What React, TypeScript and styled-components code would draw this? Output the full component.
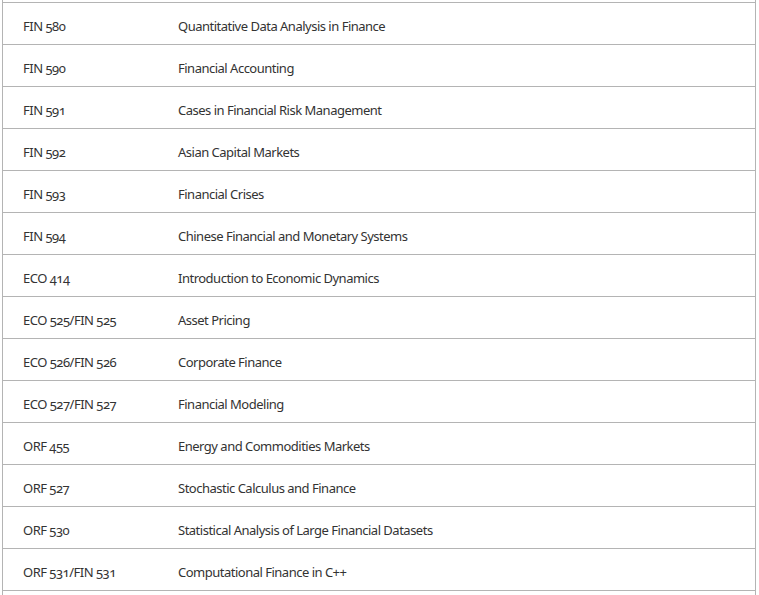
import React from "react";
import styled, { createGlobalStyle } from "styled-components";

const Global = createGlobalStyle`
  html, body { margin: 0; padding: 0; background: #fff; overflow: hidden; }
  body { font-family: "Noto Sans", "Open Sans", sans-serif; }
`;

const Frame = styled.div`
  margin-left: 2px;
  width: 754px;
  box-sizing: border-box;
  border-left: 1px solid #b4b4b4;
  border-right: 1px solid #b4b4b4;
  padding-top: 2px;
  padding-bottom: 10px;
`;

const Row = styled.div<{ $last?: boolean }>`
  display: flex;
  align-items: center;
  height: ${(p) => (p.$last ? "43px" : "42px")};
  box-sizing: border-box;
  padding-top: 4px;
  border-top: 1px solid #b4b4b4;
  border-bottom: ${(p) => (p.$last ? "1px solid #b4b4b4" : "none")};
  font-size: 13px;
  color: #333;
  font-variant-numeric: oldstyle-nums;
  letter-spacing: -0.5px;
`;

const Code = styled.div`
  width: 155px;
  padding-left: 20px;
  flex-shrink: 0;
`;

const Title = styled.div`
  flex: 1;
`;

const courses: [string, string][] = [
  ["FIN 580", "Quantitative Data Analysis in Finance"],
  ["FIN 590", "Financial Accounting"],
  ["FIN 591", "Cases in Financial Risk Management"],
  ["FIN 592", "Asian Capital Markets"],
  ["FIN 593", "Financial Crises"],
  ["FIN 594", "Chinese Financial and Monetary Systems"],
  ["ECO 414", "Introduction to Economic Dynamics"],
  ["ECO 525/FIN 525", "Asset Pricing"],
  ["ECO 526/FIN 526", "Corporate Finance"],
  ["ECO 527/FIN 527", "Financial Modeling"],
  ["ORF 455", "Energy and Commodities Markets"],
  ["ORF 527", "Stochastic Calculus and Finance"],
  ["ORF 530", "Statistical Analysis of Large Financial Datasets"],
  ["ORF 531/FIN 531", "Computational Finance in C++"],
];

export default function App() {
  return (
    <>
      <Global />
      <Frame>
        {courses.map(([c, t], i) => (
          <Row key={c} $last={i === courses.length - 1}>
            <Code>{c}</Code>
            <Title>{t}</Title>
          </Row>
        ))}
      </Frame>
    </>
  );
}
